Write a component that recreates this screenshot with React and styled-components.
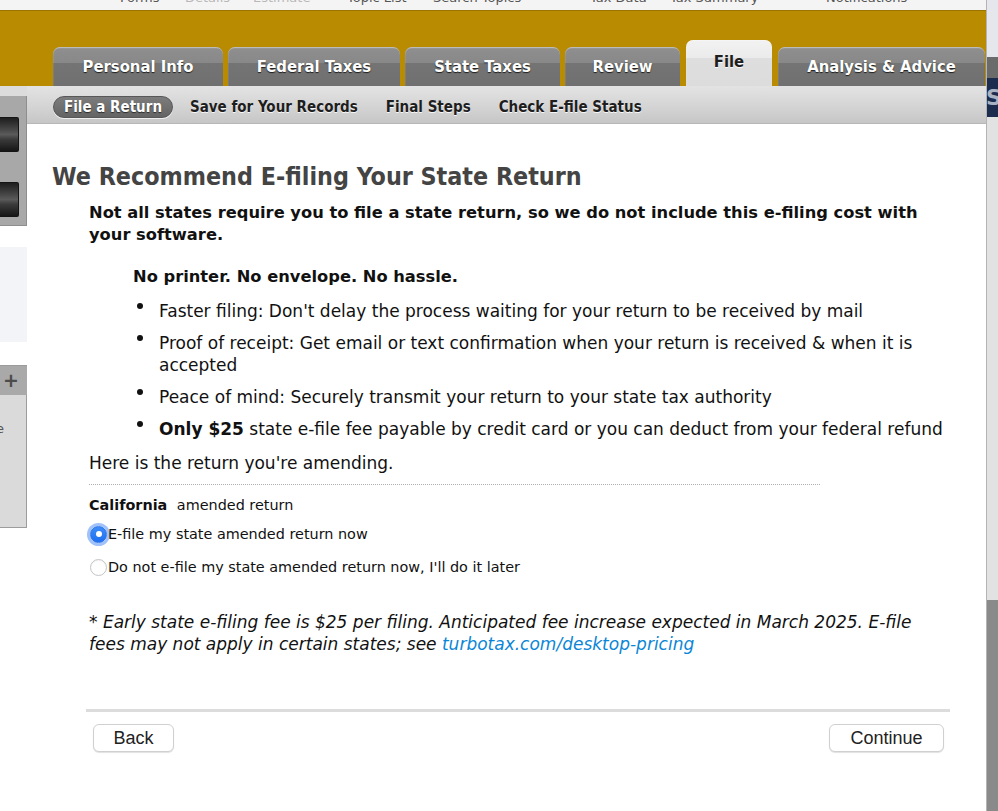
import React from "react";
import styled, { createGlobalStyle } from "styled-components";

const SANS = `"DejaVu Sans", "Liberation Sans", sans-serif`;
const COND = `"DejaVu Sans Condensed", "DejaVu Sans", sans-serif`;
const HELV = `"Liberation Sans", Arial, sans-serif`;

const GlobalStyle = createGlobalStyle`
  html, body { margin: 0; padding: 0; background: #fff; }
  body { font-family: ${SANS}; overflow: hidden; }
  * { box-sizing: border-box; }
`;

const Page = styled.div`
  display: flex;
  width: 998px;
  height: 811px;
  overflow: hidden;
  background: #fff;
`;

const Main = styled.div`
  width: 987px;
  flex: none;
  display: flex;
  flex-direction: column;
  border-right: 1px solid #b4b4b4;
`;

/* ---------- top menu (mostly scrolled out of view) ---------- */
const TopMenu = styled.div`
  height: 11px;
  flex: none;
  display: flex;
  overflow: hidden;
  background: #f4f4f4;
  border-bottom: 1px solid #9b7400;
`;

const MenuItem = styled.span`
  flex: none;
  width: ${(p) => p.$w}px;
  margin-left: ${(p) => p.$ml || 0}px;
  margin-top: -10px;
  font: 13px/15px ${SANS};
  color: ${(p) => (p.$dim ? "#b8b8b8" : "#555")};
  white-space: nowrap;
`;

/* ---------- gold tab band ---------- */
const GoldBand = styled.div`
  height: 75px;
  flex: none;
  display: flex;
  align-items: flex-end;
  gap: 5px;
  padding-left: 53px;
  background: #b98b00;
`;

const Tab = styled.div`
  flex: none;
  width: ${(p) => p.$w}px;
  height: ${(p) => (p.$active ? 46 : 39)}px;
  margin-left: ${(p) => p.$ml || 0}px;
  padding-bottom: ${(p) => (p.$active ? 4 : 0)}px;
  display: flex;
  align-items: center;
  justify-content: center;
  border-radius: 7px 7px 0 0;
  font-family: ${COND};
  font-stretch: condensed;
  font-weight: bold;
  font-size: 16.5px;
  color: ${(p) => (p.$active ? "#1e1e1e" : "#fff")};
  text-shadow: ${(p) =>
    p.$active ? "0 1px 0 rgba(255,255,255,0.9)" : "0 1px 1px rgba(0,0,0,0.75)"};
  background: ${(p) =>
    p.$active
      ? "linear-gradient(#f2f2f2 0%, #ebebeb 38%, #dedede 40%, #dcdcdc 100%)"
      : "linear-gradient(#a3a3a3 0%, #8e8e8e 6%, #888 42%, #747474 42%, #707070 100%)"};
  box-shadow: inset 0 1px 0 rgba(255, 255, 255, 0.3), inset 1px 0 0 rgba(255,255,255,0.08);
`;

/* ---------- body ---------- */
const Body = styled.div`
  flex: 1;
  display: flex;
  min-height: 0;
`;

const LeftRail = styled.div`
  width: 27px;
  flex: none;
  display: flex;
  flex-direction: column;
`;

const RailTop = styled.div`
  height: 10px;
  background: #dcdcdc;
`;

const Dock = styled.div`
  height: 130px;
  display: flex;
  flex-direction: column;
  gap: 30px;
  padding-top: 21px;
  background: #a8a8a8;
  border-right: 1px solid #8e8e8e;
  border-bottom: 1px solid #8e8e8e;
`;

const DockButton = styled.div`
  width: 19px;
  height: 35px;
  border: 1px solid #141414;
  border-left: none;
  border-radius: 0 2px 2px 0;
  background: linear-gradient(#1e1e1e 0%, #474747 35%, #5a5a5a 50%, #3a3a3a 65%, #161616 100%);
`;

const RailGap = styled.div`
  height: ${(p) => p.$h}px;
`;

const RailCard = styled.div`
  height: 95px;
  background: #f3f4f7;
`;

const RailHeader = styled.div`
  height: 30px;
  padding-left: 3px;
  background: #a9a9a9;
  border-top: 1px solid #9a9a9a;
  font: bold 19px/28px ${SANS};
  color: #4c4c4c;
`;

const RailPanel = styled.div`
  height: 133px;
  overflow: hidden;
  background: #dadada;
  border-right: 1px solid #9c9c9c;
  border-bottom: 1px solid #9c9c9c;
`;

const RailText = styled.div`
  margin: 26px 0 0 -4px;
  font: 13px/16px ${SANS};
  color: #555;
`;

const Column = styled.div`
  flex: 1;
  display: flex;
  flex-direction: column;
  min-width: 0;
`;

const SubNav = styled.div`
  height: 38px;
  flex: none;
  display: flex;
  align-items: center;
  gap: 6px;
  padding: 5px 0 0 26px;
  background: linear-gradient(#e3e3e3 0%, #d3d3d3 60%, #c6c6c6 100%);
  border-bottom: 1px solid #b8b8b8;
`;

const SubItem = styled.span`
  height: 22px;
  display: flex;
  align-items: center;
  padding: 0 10px;
  border-radius: 11px;
  font-family: ${COND};
  font-stretch: condensed;
  font-weight: bold;
  font-size: 15px;
  white-space: nowrap;
  color: ${(p) => (p.$active ? "#fff" : "#1e1e1e")};
  background: ${(p) => (p.$active ? "linear-gradient(#7c7c7c, #646464)" : "transparent")};
  border: 1px solid ${(p) => (p.$active ? "#585858" : "transparent")};
  text-shadow: ${(p) =>
    p.$active ? "0 1px 1px rgba(0,0,0,0.6)" : "0 1px 0 rgba(255,255,255,0.85)"};
  box-shadow: ${(p) => (p.$active ? "0 1px 0 rgba(255,255,255,0.7)" : "none")};
`;

const Content = styled.div`
  padding: 39px 0 0 25px;
  color: #111;
`;

const Title = styled.h1`
  margin: 0;
  font-family: ${COND};
  font-stretch: condensed;
  font-weight: bold;
  font-size: 24.8px;
  line-height: 28px;
  color: #444;
`;

const Section = styled.div`
  margin-left: 37px;
  width: 863px;
`;

const Lead = styled.p`
  margin: 11px 0 0;
  font: bold 16.3px/22px ${SANS};
`;

const Tagline = styled.p`
  margin: 20px 0 0 44px;
  font: bold 16.3px/22px ${SANS};
`;

const Bullets = styled.ul`
  list-style: none;
  margin: 12px 0 0 44px;
  padding: 0;
  display: flex;
  flex-direction: column;
  gap: 10px;
`;

const Bullet = styled.li`
  display: flex;
  font: 17px/22px ${SANS};
`;

const Dot = styled.span`
  flex: none;
  width: 26px;
  &::before {
    content: "";
    display: block;
    width: 6px;
    height: 6px;
    margin: 3px 0 0 4px;
    border-radius: 50%;
    background: #111;
  }
`;

const Plain = styled.p`
  margin: 12px 0 0;
  font: 17px/22px ${SANS};
`;

const Dotted = styled.div`
  margin-top: 10px;
  width: 731px;
  border-top: 1px dotted #b0b0b0;
`;

const StateLine = styled.div`
  margin-top: 10px;
  font: 14.4px/20px ${SANS};
  b {
    margin-right: 5px;
  }
`;

const RadioGroup = styled.div`
  margin-top: 6px;
  display: flex;
  flex-direction: column;
  gap: 7px;
`;

const RadioRow = styled.label`
  height: 26px;
  display: flex;
  align-items: center;
  padding-left: 1px;
  font: 14.4px/20px ${SANS};
`;

const Radio = styled.span`
  flex: none;
  width: 17px;
  height: 17px;
  margin-right: 1px;
  border-radius: 50%;
  display: flex;
  align-items: center;
  justify-content: center;
  background: ${(p) => (p.$on ? "linear-gradient(#3d8cf8, #1f6ff0)" : "#fff")};
  border: 1px solid ${(p) => (p.$on ? "#2a72e6" : "#c4c4c4")};
  box-shadow: ${(p) =>
    p.$on ? "0 0 0 3px rgba(96, 152, 246, 0.6)" : "inset 0 1px 1px rgba(0,0,0,0.05)"};
  &::after {
    content: "";
    display: ${(p) => (p.$on ? "block" : "none")};
    width: 6px;
    height: 6px;
    border-radius: 50%;
    background: #fff;
  }
`;

const Note = styled.p`
  margin: 31px 0 0;
  font: italic 17px/22px ${SANS};
`;

const Link = styled.a`
  color: #0b86d6;
  text-decoration: none;
`;

const Rule = styled.div`
  margin: 54px 0 0 34px;
  width: 864px;
  height: 3px;
  background: #dcdcdc;
`;

const ButtonRow = styled.div`
  margin: 12px 0 0 41px;
  width: 851px;
  display: flex;
  justify-content: space-between;
`;

const Button = styled.button`
  width: ${(p) => p.$w}px;
  height: 28px;
  padding: 0;
  background: #fff;
  border: 1px solid #d0d0d0;
  border-radius: 6px;
  box-shadow: 0 1px 1px rgba(0, 0, 0, 0.12);
  font: 18px/26px ${HELV};
  color: #222;
`;

/* ---------- right edge (neighbouring window) ---------- */
const Edge = styled.div`
  flex: 1;
  display: flex;
  flex-direction: column;
`;

const EdgeBand = styled.div`
  flex: ${(p) => (p.$grow ? "1" : "none")};
  height: ${(p) => (p.$h ? `${p.$h}px` : "auto")};
  background: ${(p) => p.$bg};
  overflow: hidden;
`;

const EdgeLetter = styled.span`
  display: block;
  font: bold 22px/39px ${SANS};
  color: #aab2c2;
  margin-left: -1px;
`;

const menu = [
  { t: "Forms", x: 120, w: 65 },
  { t: "Details", x: 185, w: 68, dim: true },
  { t: "Estimate", x: 253, w: 94, dim: true },
  { t: "Topic List", x: 347, w: 86 },
  { t: "Search Topics", x: 433, w: 157 },
  { t: "Tax Data", x: 590, w: 80 },
  { t: "Tax Summary", x: 670, w: 156 },
  { t: "Notifications", x: 826, w: 120 },
];

const tabs = [
  { t: "Personal Info", w: 170 },
  { t: "Federal Taxes", w: 172 },
  { t: "State Taxes", w: 155 },
  { t: "Review", w: 115 },
  { t: "File", w: 86, active: true, ml: 1 },
  { t: "Analysis & Advice", w: 207, ml: 1 },
];

const subnav = [
  { t: "File a Return", active: true },
  { t: "Save for Your Records" },
  { t: "Final Steps" },
  { t: "Check E-file Status" },
];

export default function App() {
  return (
    <>
      <GlobalStyle />
      <Page>
        <Main>
          <TopMenu>
            {menu.map((m, i) => (
              <MenuItem key={m.t} $w={m.w} $ml={i === 0 ? m.x : 0} $dim={m.dim}>
                {m.t}
              </MenuItem>
            ))}
          </TopMenu>

          <GoldBand>
            {tabs.map((t) => (
              <Tab key={t.t} $w={t.w} $active={t.active} $ml={t.ml}>
                {t.t}
              </Tab>
            ))}
          </GoldBand>

          <Body>
            <LeftRail>
              <RailTop />
              <Dock>
                <DockButton />
                <DockButton />
              </Dock>
              <RailGap $h={21} />
              <RailCard />
              <RailGap $h={23} />
              <RailHeader>+</RailHeader>
              <RailPanel>
                <RailText>e</RailText>
              </RailPanel>
            </LeftRail>

            <Column>
              <SubNav>
                {subnav.map((s) => (
                  <SubItem key={s.t} $active={s.active}>
                    {s.t}
                  </SubItem>
                ))}
              </SubNav>

              <Content>
                <Title>We Recommend E-filing Your State Return</Title>
                <Section>
                  <Lead>
                    Not all states require you to file a state return, so we do not include
                    this e-filing cost with your software.
                  </Lead>
                  <Tagline>No printer. No envelope. No hassle.</Tagline>
                  <Bullets>
                    <Bullet>
                      <Dot />
                      <span>
                        Faster filing: Don't delay the process waiting for your return to be
                        received by mail
                      </span>
                    </Bullet>
                    <Bullet>
                      <Dot />
                      <span>
                        Proof of receipt: Get email or text confirmation when your return is
                        received &amp; when it is accepted
                      </span>
                    </Bullet>
                    <Bullet>
                      <Dot />
                      <span>
                        Peace of mind: Securely transmit your return to your state tax authority
                      </span>
                    </Bullet>
                    <Bullet>
                      <Dot />
                      <span>
                        <b>Only $25</b> state e-file fee payable by credit card or you can deduct
                        from your federal refund
                      </span>
                    </Bullet>
                  </Bullets>
                  <Plain>Here is the return you're amending.</Plain>
                  <Dotted />
                  <StateLine>
                    <b>California</b> amended return
                  </StateLine>
                  <RadioGroup>
                    <RadioRow>
                      <Radio $on />
                      E-file my state amended return now
                    </RadioRow>
                    <RadioRow>
                      <Radio />
                      Do not e-file my state amended return now, I'll do it later
                    </RadioRow>
                  </RadioGroup>
                  <Note>
                    * Early state e-filing fee is $25 per filing. Anticipated fee increase
                    expected in March 2025. E-file fees may not apply in certain states; see{" "}
                    <Link href="#">turbotax.com/desktop-pricing</Link>
                  </Note>
                </Section>
                <Rule />
                <ButtonRow>
                  <Button $w={81}>Back</Button>
                  <Button $w={115}>Continue</Button>
                </ButtonRow>
              </Content>
            </Column>
          </Body>
        </Main>

        <Edge>
          <EdgeBand $h={57} $bg="#e5e7ec" />
          <EdgeBand $h={21} $bg="#6b6b6b" />
          <EdgeBand $h={39} $bg="#1b2c4f">
            <EdgeLetter>S</EdgeLetter>
          </EdgeBand>
          <EdgeBand $grow $bg="#e2e2e2" />
          <EdgeBand $h={211} $bg="#8a8a8a" />
        </Edge>
      </Page>
    </>
  );
}
